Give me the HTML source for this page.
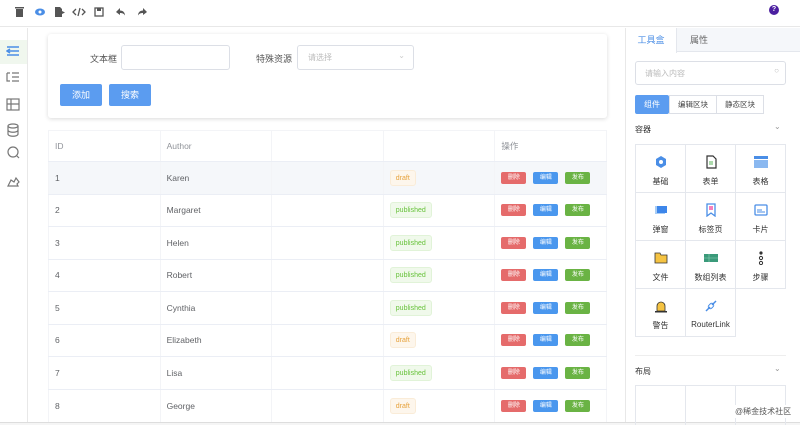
<!DOCTYPE html>
<html><head><meta charset="utf-8"><style>
*{box-sizing:border-box;margin:0;padding:0}
html,body{width:800px;height:425px;overflow:hidden}
body{background:#fff;font-family:"Liberation Sans","Noto Sans CJK SC",sans-serif;color:#606266;position:relative;font-size:8px}
.abs{position:absolute}
.top{left:0;top:0;width:800px;height:27px;border-bottom:1px solid #e8e8e8}
.side{left:0;top:28px;width:28px;height:394px;border-right:1px solid #e8e8e8}
.card{left:48px;top:34px;width:559px;height:84px;box-shadow:0 1px 4px rgba(0,0,0,.15);border-radius:3px;background:#fff}
.inp{border:1px solid #dcdfe6;border-radius:3px;background:#fff}
.btn{background:#5b9cf0;color:#fff;border-radius:2px;text-align:center;font-size:9px}
table{border-collapse:collapse;position:absolute;left:48px;top:130px;width:559px;table-layout:fixed}
td{border-bottom:1px solid #ebeef5;border-right:1px solid #f3f4f7;height:32.5px;padding-left:6px;font-size:8.5px;color:#606266}
tr td:first-child{border-left:1px solid #f3f4f7}
tr.h td{height:31px;color:#909399;border-top:1px solid #f3f4f7}
tr.s td{background:#f5f7fa}
.tag{display:inline-block;font-size:7px;padding:0 5px;height:16px;line-height:15px;border-radius:3px;border:1px solid}
.dr{color:#e6a23c;background:#fdf6ec;border-color:#faecd8}
.pb{color:#67c23a;background:#f0f9eb;border-color:#e1f3d8}
.o{display:inline-block;width:25px;height:12px;line-height:12px;color:#fff;font-size:6px;text-align:center;border-radius:2px;margin-right:7px;vertical-align:middle}
.rp{left:625px;top:28px;width:175px;height:394px;border-left:1px solid #e8e8e8}
.grid{display:grid;grid-template-columns:50px 50px 50px;position:absolute}
.cell{border:1px solid #e4e7ed;margin:0 -1px -1px 0;height:49px;text-align:center;font-size:8px;color:#333;padding-top:10px}
.ic{display:block;width:14px;height:14px;margin:0 auto 7px}
</style></head><body>
<div class="abs top">
<svg class="abs" style="left:14px;top:6px" width="140" height="12" fill="#555">
<rect x="2" y="3" width="7" height="8" /><rect x="1" y="1" width="9" height="1.5"/>
<ellipse cx="26" cy="6" rx="5" ry="3.5" fill="#4a8ee6"/><circle cx="26" cy="6" r="1.5" fill="#fff"/>
<path d="M41 1h5l2 2v8h-7z"/><path d="M48 5l3 1.5-3 1.5z"/>
<path d="M62 3l-3 3 3 3M68 3l3 3-3 3M66 2l-2 8" stroke="#555" stroke-width="1.3" fill="none"/>
<rect x="81" y="2" width="8" height="8" fill="none" stroke="#555" stroke-width="1.3"/><rect x="83" y="2" width="4" height="3"/>
<path d="M102 6l4-4v2.5c3 0 5 2 5 5-1-2-3-2.5-5-2.5V9z"/>
<path d="M133 6l-4-4v2.5c-3 0-5 2-5 5 1-2 3-2.5 5-2.5V9z"/>
</svg>
<div class="abs" style="left:769px;top:5px;width:10px;height:10px;border-radius:50%;background:#4b1fa0;color:#fff;font-size:7px;text-align:center;line-height:10px;font-weight:bold">?</div>
</div>
<div class="abs side">
<div style="position:absolute;left:0;top:12px;width:27px;height:24px;background:#f0f7ee"></div>
<svg class="abs" style="left:6px;top:16px" width="16" height="160" fill="none" stroke="#777" stroke-width="1.2">
<path d="M1 3h12M1 7h12M1 11h12M4 5l-3 2 3 2" stroke="#4a8ee6" stroke-width="1.5"/>
<path d="M1 29h3M1 29v8h3M6 29h7M6 33h7M6 37h7"/>
<rect x="1" y="55" width="12" height="11"/><path d="M5 55v11M1 60h12"/>
<ellipse cx="7" cy="82" rx="5" ry="2"/><path d="M2 82v8c0 3 10 3 10 0v-8M2 86c0 3 10 3 10 0"/>
<circle cx="7" cy="108" r="5"/><path d="M11 112l2 2"/>
<path d="M2 142l3-6 3 2 2-4 3 4-2 2 1 2z"/>
</svg>
</div>
<div class="abs card">
<div class="abs" style="left:42px;top:18px;font-size:9px;color:#555">文本框</div>
<div class="abs inp" style="left:73px;top:11px;width:109px;height:25px"></div>
<div class="abs" style="left:208px;top:18px;font-size:9px;color:#555">特殊资源</div>
<div class="abs inp" style="left:249px;top:11px;width:117px;height:25px;color:#bbb;padding:6px 10px;font-size:8px">请选择<span style="position:absolute;right:8px;top:5px;color:#ccc">⌄</span></div>
<div class="abs btn" style="left:12px;top:50px;width:42px;height:22px;line-height:22px">添加</div>
<div class="abs btn" style="left:61px;top:50px;width:42px;height:22px;line-height:22px">搜索</div>
</div>
<table>
<tr class="h"><td>ID</td><td>Author</td><td></td><td></td><td>操作</td></tr>
<tr class="s"><td>1</td><td>Karen</td><td></td><td><span class="tag dr">draft</span></td><td><span class="o" style="background:#e56b6b">删除</span><span class="o" style="background:#4a97ee">编辑</span><span class="o" style="background:#6ab344">发布</span></td></tr>
<tr><td>2</td><td>Margaret</td><td></td><td><span class="tag pb">published</span></td><td><span class="o" style="background:#e56b6b">删除</span><span class="o" style="background:#4a97ee">编辑</span><span class="o" style="background:#6ab344">发布</span></td></tr>
<tr><td>3</td><td>Helen</td><td></td><td><span class="tag pb">published</span></td><td><span class="o" style="background:#e56b6b">删除</span><span class="o" style="background:#4a97ee">编辑</span><span class="o" style="background:#6ab344">发布</span></td></tr>
<tr><td>4</td><td>Robert</td><td></td><td><span class="tag pb">published</span></td><td><span class="o" style="background:#e56b6b">删除</span><span class="o" style="background:#4a97ee">编辑</span><span class="o" style="background:#6ab344">发布</span></td></tr>
<tr><td>5</td><td>Cynthia</td><td></td><td><span class="tag pb">published</span></td><td><span class="o" style="background:#e56b6b">删除</span><span class="o" style="background:#4a97ee">编辑</span><span class="o" style="background:#6ab344">发布</span></td></tr>
<tr><td>6</td><td>Elizabeth</td><td></td><td><span class="tag dr">draft</span></td><td><span class="o" style="background:#e56b6b">删除</span><span class="o" style="background:#4a97ee">编辑</span><span class="o" style="background:#6ab344">发布</span></td></tr>
<tr><td>7</td><td>Lisa</td><td></td><td><span class="tag pb">published</span></td><td><span class="o" style="background:#e56b6b">删除</span><span class="o" style="background:#4a97ee">编辑</span><span class="o" style="background:#6ab344">发布</span></td></tr>
<tr><td style="border-bottom:none">8</td><td style="border-bottom:none">George</td><td style="border-bottom:none"></td><td style="border-bottom:none"><span class="tag dr">draft</span></td><td style="border-bottom:none"><span class="o" style="background:#e56b6b">删除</span><span class="o" style="background:#4a97ee">编辑</span><span class="o" style="background:#6ab344">发布</span></td></tr>
</table>
<div class="abs" style="left:0;top:422px;width:800px;height:3px;border-top:1px solid #ddd;background:#f5f5f5"></div>
<div class="abs rp">
<div class="abs" style="left:0;top:0;width:174px;height:24px;background:#f5f7fa;border-bottom:1px solid #e4e7ed"></div>
<div class="abs" style="left:0;top:0;width:51px;height:25px;background:#fff;border-right:1px solid #e4e7ed;color:#4a8ee6;font-size:9px;text-align:center;line-height:24px">工具盒</div>
<div class="abs" style="left:64px;top:0;font-size:9px;line-height:24px;color:#666">属性</div>
<div class="abs inp" style="left:9px;top:33px;width:151px;height:24px;color:#bbb;padding:6px 9px;font-size:8px">请输入内容<span style="position:absolute;right:6px;top:4px">○</span></div>
<div class="abs btn" style="left:9px;top:67px;width:34px;height:19px;line-height:19px;font-size:8px">组件</div>
<div class="abs inp" style="left:43px;top:67px;width:48px;height:19px;line-height:17px;font-size:7.5px;text-align:center;color:#444;border-radius:0">编辑区块</div>
<div class="abs inp" style="left:90px;top:67px;width:48px;height:19px;line-height:17px;font-size:7.5px;text-align:center;color:#444;border-radius:0">静态区块</div>
<div class="abs" style="left:9px;top:96px;font-size:8px;color:#333">容器</div>
<div class="abs" style="left:148px;top:94px;color:#999">⌄</div>
<div class="grid" style="left:9px;top:116px">
<div class="cell"><svg class="ic" viewBox="0 0 14 14"><path d="M7 1l5 3v6l-5 3-5-3V4z" fill="#4a8ee6"/><circle cx="7" cy="7" r="2" fill="#fff"/></svg>基础</div>
<div class="cell"><svg class="ic" viewBox="0 0 14 14"><path d="M3 1h6l3 3v9H3z" fill="none" stroke="#333" stroke-width="1.2"/><path d="M5 7h4M5 9h4" stroke="#5ab45a"/></svg>表单</div>
<div class="cell"><svg class="ic" viewBox="0 0 14 14"><rect x="0" y="1" width="14" height="3" fill="#4a8ee6"/><rect x="0" y="5" width="14" height="8" fill="#8ab8f0"/></svg>表格</div>
<div class="cell"><svg class="ic" viewBox="0 0 14 14"><rect x="1" y="3" width="10" height="8" fill="#a8cdf5"/><rect x="3" y="3" width="10" height="7" fill="#3d86ea"/></svg>弹窗</div>
<div class="cell"><svg class="ic" viewBox="0 0 14 14"><path d="M3 1h8v12l-4-3-4 3z" fill="none" stroke="#4a8ee6" stroke-width="1.3"/><path d="M5 4h4M5 6h4" stroke="#e07"/></svg>标签页</div>
<div class="cell"><svg class="ic" viewBox="0 0 14 14"><rect x="1" y="2" width="12" height="10" rx="1" fill="none" stroke="#4a8ee6" stroke-width="1.3"/><path d="M3 7h5M3 9h8" stroke="#4a8ee6"/></svg>卡片</div>
<div class="cell"><svg class="ic" viewBox="0 0 14 14"><path d="M1 2h5l1 2h6v8H1z" fill="#f5c342" stroke="#333" stroke-width=".8"/></svg>文件</div>
<div class="cell"><svg class="ic" viewBox="0 0 14 14"><rect x="0" y="3" width="14" height="8" fill="#3a9a7a"/><path d="M0 7h14M5 3v8" stroke="#8fd0b8" stroke-width=".6"/></svg>数组列表</div>
<div class="cell"><svg class="ic" viewBox="0 0 14 14"><circle cx="7" cy="2" r="1.6" fill="#333"/><circle cx="7" cy="7" r="1.6" fill="none" stroke="#333"/><circle cx="7" cy="12" r="1.6" fill="none" stroke="#333"/></svg>步骤</div>
<div class="cell"><svg class="ic" viewBox="0 0 14 14"><path d="M3 12V7a4 4 0 018 0v5z" fill="#f5c342" stroke="#333" stroke-width=".8"/><rect x="1" y="12" width="12" height="1.5" fill="#333"/></svg>警告</div>
<div class="cell"><svg class="ic" viewBox="0 0 14 14"><path d="M2 12l4-4M8 6l4-4" stroke="#4a8ee6" stroke-width="1.5" fill="none"/><rect x="4" y="5" width="6" height="4" rx="2" transform="rotate(-45 7 7)" fill="none" stroke="#4a8ee6"/></svg>RouterLink</div>
</div>
<div class="abs" style="left:9px;top:327px;width:151px;border-top:1px solid #eee"></div>
<div class="abs" style="left:9px;top:338px;font-size:8px;color:#333">布局</div>
<div class="abs" style="left:148px;top:336px;color:#999">⌄</div>
<div class="abs" style="left:9px;top:357px;width:151px;height:40px;border:1px solid #e4e7ed;border-bottom:none"></div>
<div class="abs" style="left:59px;top:357px;height:40px;border-left:1px solid #e4e7ed"></div>
<div class="abs" style="left:109px;top:357px;height:40px;border-left:1px solid #e4e7ed"></div>
<div class="abs" style="left:108px;top:377px;font-size:8px;color:#555;background:#fff;padding:1px">@稀金技术社区</div>
</div>
</body></html>
